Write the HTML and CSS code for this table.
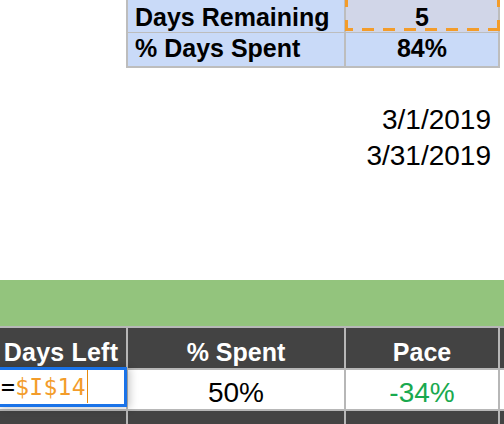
FILE: index.html
```html
<!DOCTYPE html>
<html>
<head>
<meta charset="utf-8">
<link rel="stylesheet" href="styles.css">
</head>
<body>
<div class="sheet">
  <section class="upper">
    <div class="summary">
      <div class="s-label r1">Days Remaining</div>
      <div class="s-value r1 copied">5<span class="marquee"></span></div>
      <div class="s-label r2">% Days Spent</div>
      <div class="s-value r2">84%</div>
    </div>
    <div class="dates">
      <div>3/1/2019</div>
      <div>3/31/2019</div>
    </div>
  </section>
  <div class="band"></div>
  <div class="grid">
    <div class="hd first">Days Left</div>
    <div class="hd">% Spent</div>
    <div class="hd">Pace</div>
    <div class="hd"></div>
    <div class="cell edit">
      <div class="editor">=<span class="ref">$I$14</span><span class="caret"></span></div>
    </div>
    <div class="cell">50%</div>
    <div class="cell pace">-34%</div>
    <div class="cell"></div>
    <div class="hd"></div>
    <div class="hd"></div>
    <div class="hd"></div>
    <div class="hd"></div>
  </div>
</div>
</body>
</html>
```
FILE: styles.css
```css
html, body {
  margin: 0;
  padding: 0;
  background: #ffffff;
}
body {
  width: 504px;
  height: 424px;
  overflow: hidden;
  font-family: "Liberation Sans", Arial, sans-serif;
  color: #000;
}
.sheet {
  width: 504px;
}
.upper {
  height: 280px;
  display: flex;
  flex-direction: column;
}
.summary {
  margin-left: 126px;
  width: 370px;
  display: grid;
  grid-template-columns: 216px 152px;
  grid-template-rows: 32px 33px;
  column-gap: 2px;
  row-gap: 1px;
  background: #bdbdbd;
  border-left: 2px solid #bdbdbd;
  border-right: 2px solid #bdbdbd;
  border-bottom: 2px solid #bdbdbd;
  font-weight: bold;
  font-size: 25px;
}
.s-label, .s-value {
  background: #c9daf8;
  white-space: nowrap;
}
.s-label {
  padding-left: 7px;
}
.s-value {
  text-align: center;
}
.r1 {
  padding-top: 3px;
  line-height: 29px;
}
.r2 {
  line-height: 31px;
}
.copied {
  position: relative;
  background: #d1d6e8;
}
.marquee {
  position: absolute;
  left: -1px;
  right: -2px;
  top: -6px;
  bottom: 1px;
  background:
    linear-gradient(to left, #f39c2a 0 12px, transparent 12px 21px) right bottom / 21px 3px repeat-x,
    linear-gradient(to top, #f39c2a 0 11px, transparent 11px 24px) left bottom / 3px 24px repeat-y,
    linear-gradient(to top, #f39c2a 0 11px, transparent 11px 24px) right bottom / 3px 24px repeat-y;
}
.dates {
  margin-top: 34px;
  padding-right: 13px;
  text-align: right;
  font-size: 28px;
  line-height: 36px;
}
.band {
  height: 46px;
  background: #93c47d;
}
.grid {
  display: grid;
  grid-template-columns: 126px 216px 152px 4px;
  grid-template-rows: 40px 39px 13px;
  column-gap: 2px;
  row-gap: 2px;
  background: #b7b7b7;
  border-top: 2px solid #b7b7b7;
}
.hd {
  background: #434343;
  color: #ffffff;
  font-weight: bold;
  font-size: 25px;
  text-align: center;
  padding-top: 9px;
  line-height: 31px;
  white-space: nowrap;
  overflow: hidden;
}
.hd.first {
  padding-right: 4px;
  letter-spacing: 0.2px;
}
.cell {
  background: #ffffff;
  font-size: 28px;
  text-align: center;
  padding-top: 7px;
  line-height: 32px;
  white-space: nowrap;
}
.pace {
  color: #19a94f;
}
.edit {
  position: relative;
}
.editor {
  position: absolute;
  left: -4px;
  right: -1px;
  top: -3px;
  height: 40px;
  box-sizing: border-box;
  border: 3px solid #1a73e8;
  background: #ffffff;
  box-shadow: 3px 1px 8px rgba(0, 0, 0, 0.22);
  z-index: 2;
  text-align: left;
  padding-left: 2px;
  padding-top: 4px;
  font-family: "DejaVu Sans Mono", "Liberation Mono", monospace;
  font-size: 23px;
  letter-spacing: 0.3px;
  line-height: 26px;
  color: #000;
}
.ref {
  color: #f39c2a;
}
.caret {
  position: absolute;
  left: 88px;
  top: 0;
  width: 1px;
  height: 33px;
  background: #e8890c;
}
```
